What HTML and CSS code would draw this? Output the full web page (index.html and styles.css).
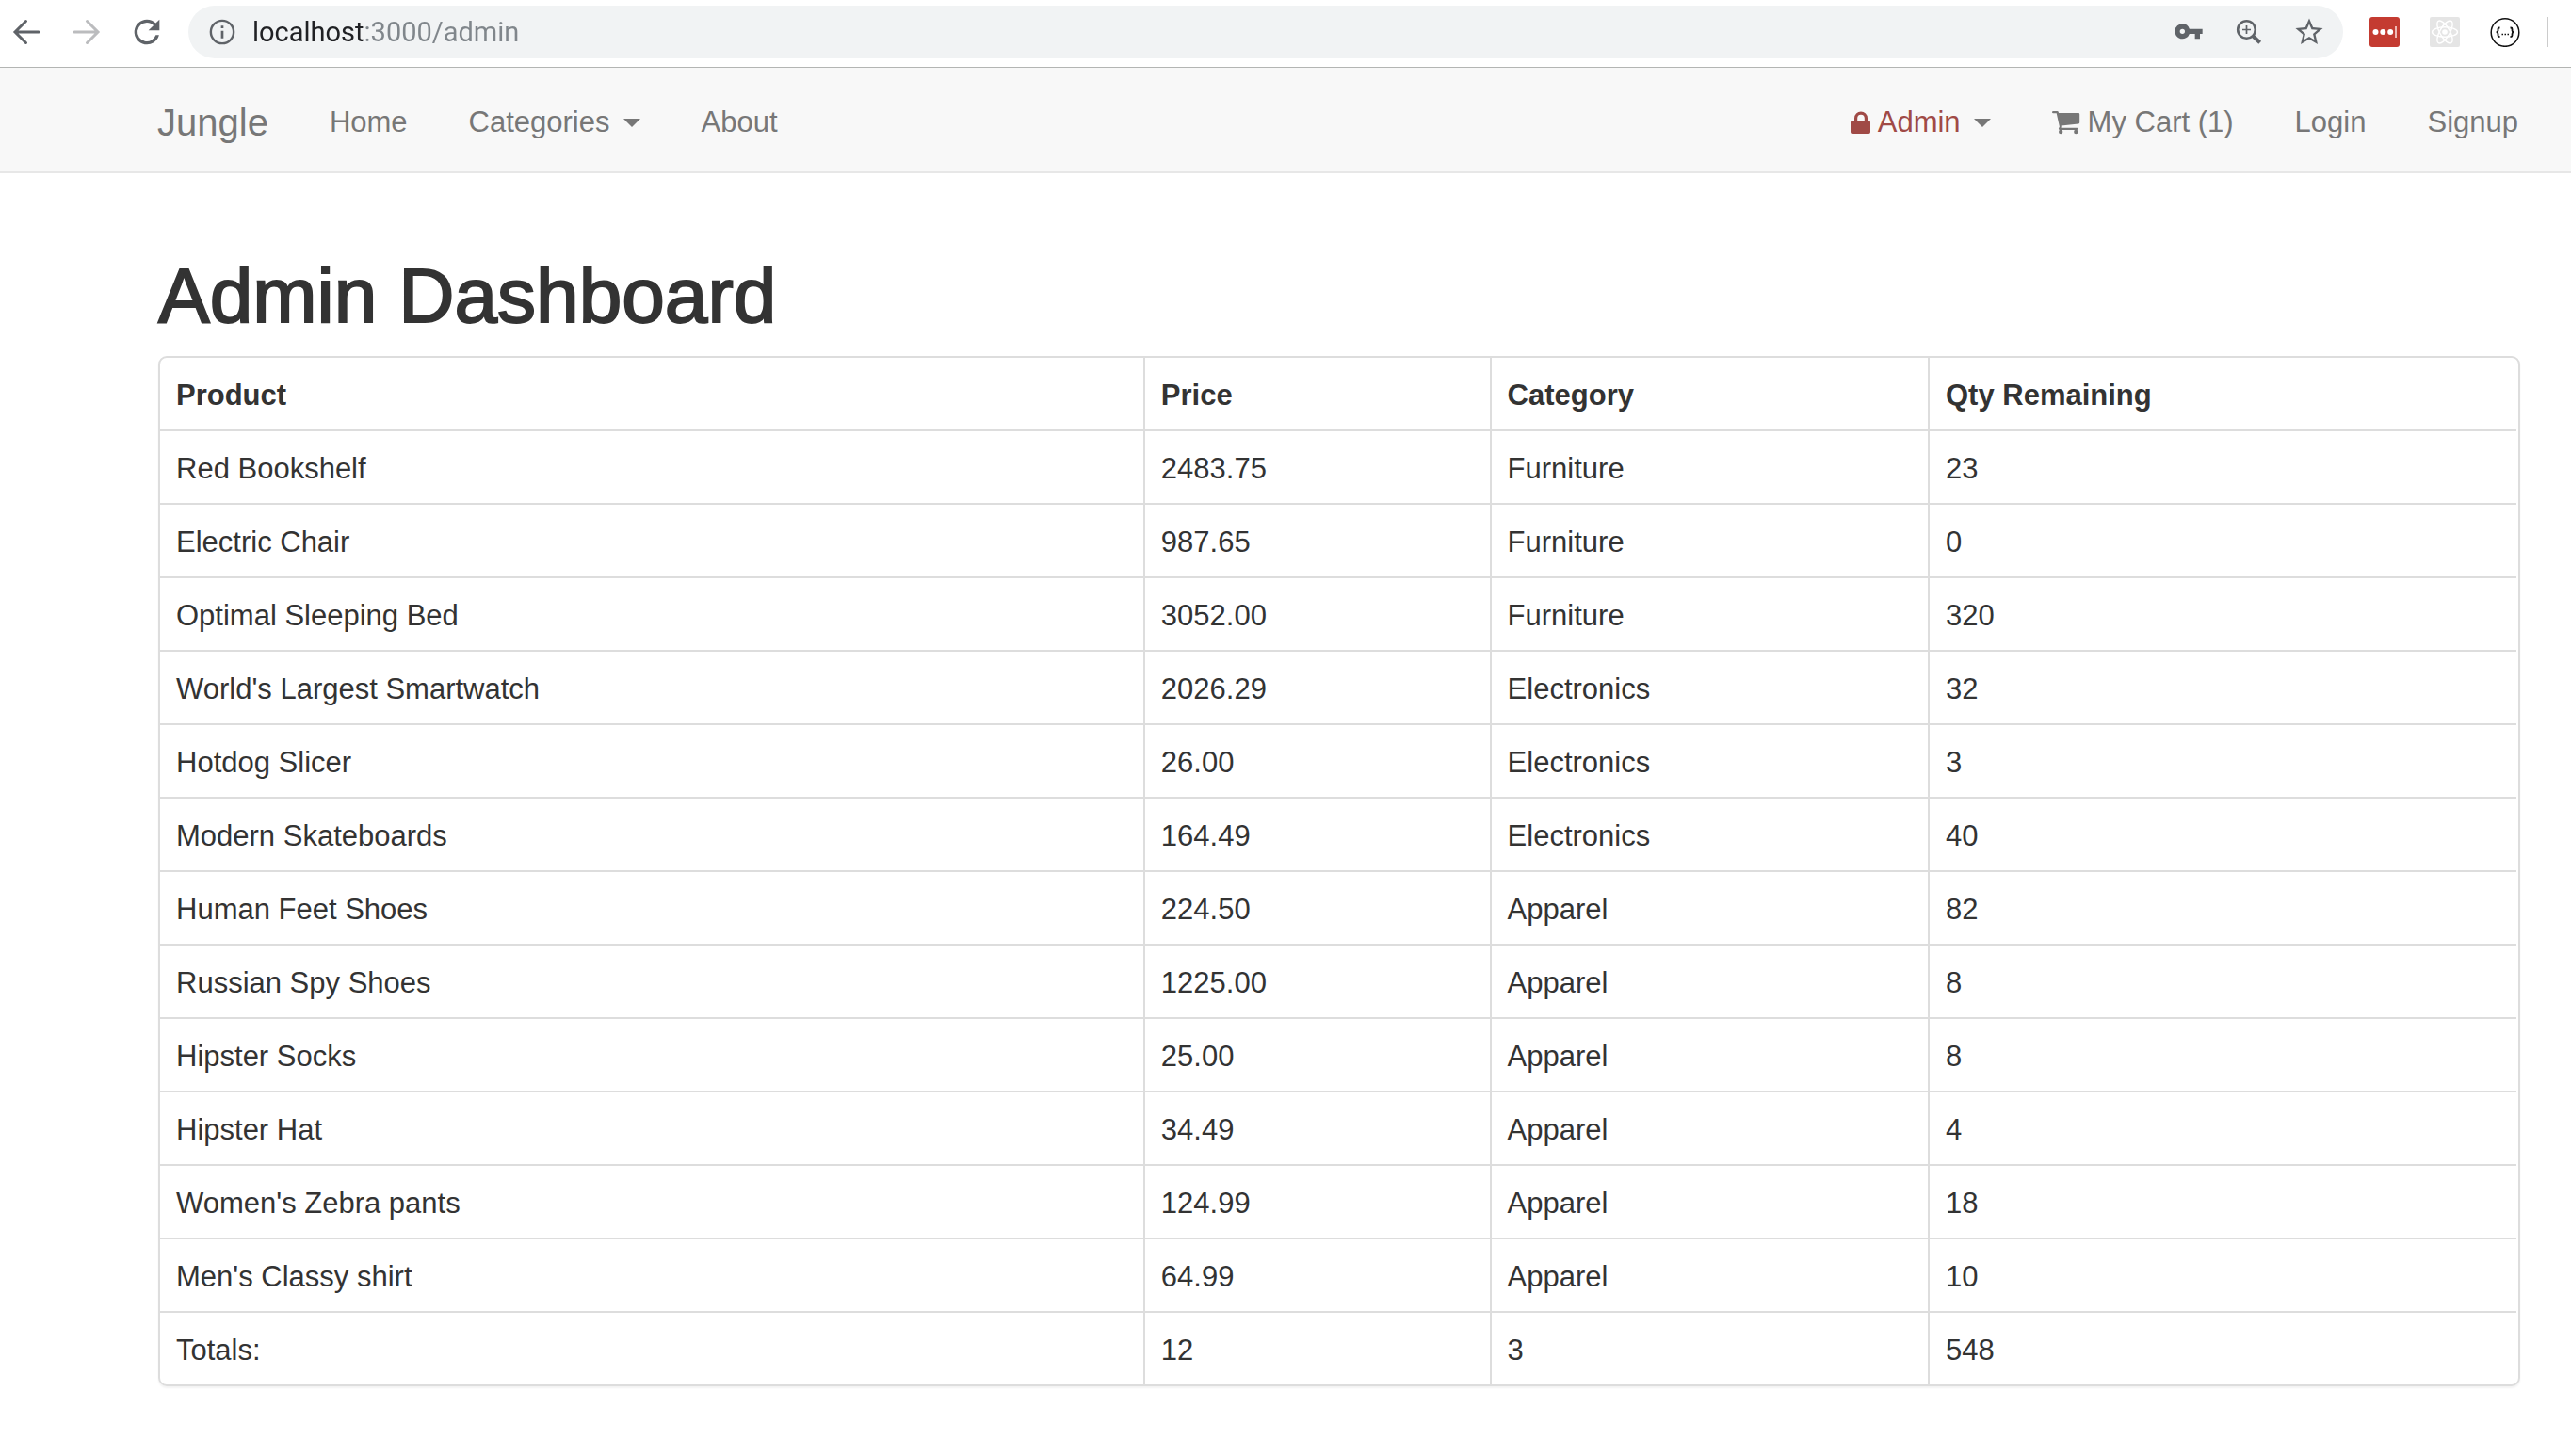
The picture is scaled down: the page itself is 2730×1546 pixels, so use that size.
FILE: index.html
```html
<!DOCTYPE html>
<html lang="en">
<head>
<meta charset="utf-8">
<title>Jungle - Admin Dashboard</title>
<link rel="stylesheet" href="styles.css">
</head>
<body>
<div class="toolbar">
  <button class="tool" type="button" aria-label="Back"><svg class="icon-lg stroke" viewBox="0 0 40 40"><path d="M33 20H9M19.500 8.500 8 20l11.500 11.500"/></svg></button>
  <button class="tool tool-disabled" type="button" aria-label="Forward" disabled><svg class="icon-lg stroke" viewBox="0 0 40 40"><path d="M7 20h24M20.500 8.500 32 20 20.500 31.500"/></svg></button>
  <button class="tool" type="button" aria-label="Reload"><svg class="icon-lg" viewBox="0 0 24 24"><path fill="currentColor" d="M17.650 6.350A7.960 7.960 0 0 0 12 4a8 8 0 1 0 7.730 10h-2.080A6 6 0 1 1 12 6c1.660 0 3.140.690 4.220 1.780L13 11h7V4z"/></svg></button>
  <form class="omnibox">
    <button class="tool" type="button" aria-label="Site information"><svg class="icon" viewBox="0 0 24 24"><path fill="currentColor" d="M11 17h2v-6h-2v6zm1-15a10 10 0 1 0 0 20 10 10 0 0 0 0-20zm0 18.200a8.200 8.200 0 1 1 0-16.400 8.200 8.200 0 0 1 0 16.400zM11 9h2V7h-2v2z"/></svg></button>
    <input class="address" type="text" aria-label="Address" value="localhost:3000/admin" spellcheck="false">
    <span class="omnibox-actions">
      <button class="tool" type="button" aria-label="Saved passwords"><svg class="icon" viewBox="0 0 24 24"><path fill="currentColor" d="M12.650 9.500A6 6 0 0 0 7 5.500a6 6 0 1 0 5.650 8H17v4h4v-4h2v-4H12.650zM7 13.500a2 2 0 1 1 0-4 2 2 0 0 1 0 4z"/></svg></button>
      <button class="tool" type="button" aria-label="Zoom"><svg class="icon" viewBox="0 0 32 32" fill="none" stroke="currentColor"><circle cx="13.500" cy="13.500" r="9.300" stroke-width="2.600"/><path stroke-width="4" d="m20 20 7.700 7.300"/><path stroke-width="1.700" d="M9 13.500h9M13.500 9v9"/></svg></button>
      <button class="tool" type="button" aria-label="Bookmark"><svg class="icon" viewBox="1 1 22 22"><path fill="currentColor" d="m22 9.240-7.190-.62L12 2 9.190 8.630 2 9.240l5.460 4.730L5.820 21 12 17.270 18.180 21l-1.630-7.030L22 9.240zM12 15.400l-3.760 2.270 1-4.280-3.320-2.880 4.380-.38L12 6.100l1.710 4.040 4.380.38-3.320 2.880 1 4.280L12 15.400z"/></svg></button>
    </span>
  </form>
  <div class="extensions">
    <button class="tool" type="button" aria-label="Password manager"><svg class="icon" viewBox="0 0 32 32"><rect width="32" height="32" rx="3" fill="#c43b31"/><g fill="#fff"><circle cx="6.500" cy="16" r="3"/><circle cx="14.300" cy="16" r="3"/><circle cx="22.200" cy="16" r="3"/><path fill="#eeb9b5" d="M27 10h2v12h-2z"/></g></svg></button>
    <button class="tool" type="button" aria-label="React tools"><svg class="icon" viewBox="0 0 32 32"><rect width="32" height="32" rx="2" fill="#e5e5e5"/><g fill="none" stroke="#fff" stroke-width="1.400"><ellipse cx="16" cy="16" rx="13.500" ry="5.200"/><ellipse cx="16" cy="16" rx="13.500" ry="5.200" transform="rotate(60 16 16)"/><ellipse cx="16" cy="16" rx="13.500" ry="5.200" transform="rotate(120 16 16)"/></g><circle cx="16" cy="16" r="2.800" fill="#fff"/></svg></button>
    <button class="tool" type="button" aria-label="JSON viewer"><svg class="icon" viewBox="0 0 32 32" fill="none" stroke="#111"><circle cx="16" cy="16.500" r="14.800" stroke-width="1.500"/><path stroke-width="1.800" d="M10.500 11.500H10q-1.500 0-1.500 1.500v1.500q0 1.500-1.800 1.700 1.800.2 1.800 1.700v1.600q0 1.500 1.500 1.500h.5M21.500 11.500h.5q1.500 0 1.500 1.500v1.500q0 1.500 1.800 1.700-1.800.2-1.800 1.700v1.600q0 1.500-1.500 1.500h-.5"/><path stroke-width="1.500" d="M12.500 18.500h1.500M15.500 18.500h1.500M18.500 18.500h1.500"/></svg></button>
  </div>
  <span class="divider"></span>
</div>

<nav class="navbar">
  <div class="nav-group">
    <a class="brand" href="#">Jungle</a>
    <a class="nav-link" href="#">Home</a>
    <button class="nav-link" type="button" aria-haspopup="true">Categories<span class="caret"></span></button>
    <a class="nav-link" href="#">About</a>
  </div>
  <div class="nav-group">
    <button class="nav-link" type="button" aria-haspopup="true"><span class="nav-label admin"><svg class="lock" viewBox="0 0 20 24"><path fill="currentColor" fill-rule="evenodd" d="M3 10V7.500a7 7 0 0 1 14 0V10h1.300q1.700 0 1.700 1.700v10.600q0 1.700-1.700 1.700H1.700Q0 24 0 22.300V11.700Q0 10 1.700 10zM6.200 10h7.600V7.500a3.800 3.800 0 0 0-7.600 0z"/></svg>Admin</span><span class="caret"></span></button>
    <a class="nav-link nav-label" href="#"><svg class="cart" viewBox="0 0 30 26"><path fill="currentColor" d="M1.200 1h4.300q1.100 0 1.300 1l.2 1H28q1.200 0 1.200 1.200v9q0 1-1.100 1.200L9.600 16.600q.3 1.100-.1 2.100h16.900q1.100 0 1.100 1.100t-1.100 1.100H8q-1.100 0-1.100-1.100 0-.4 1-2.400L4.700 3.300H1.200Q0 3.300 0 2.200T1.200 1z"/><circle fill="currentColor" cx="9.200" cy="23" r="2.200"/><circle fill="currentColor" cx="25.300" cy="23" r="2.200"/></svg>My Cart (1)</a>
    <a class="nav-link" href="#">Login</a>
    <a class="nav-link" href="#">Signup</a>
  </div>
</nav>

<main class="container">
  <h1>Admin Dashboard</h1>
  <div class="panel">
    <table>
      <colgroup><col class="col-product"><col class="col-price"><col class="col-category"><col></colgroup>
      <thead>
        <tr><th scope="col">Product</th><th scope="col">Price</th><th scope="col">Category</th><th scope="col">Qty Remaining</th></tr>
      </thead>
      <tbody>
        <tr><td>Red Bookshelf</td><td>2483.75</td><td>Furniture</td><td>23</td></tr>
        <tr><td>Electric Chair</td><td>987.65</td><td>Furniture</td><td>0</td></tr>
        <tr><td>Optimal Sleeping Bed</td><td>3052.00</td><td>Furniture</td><td>320</td></tr>
        <tr><td>World's Largest Smartwatch</td><td>2026.29</td><td>Electronics</td><td>32</td></tr>
        <tr><td>Hotdog Slicer</td><td>26.00</td><td>Electronics</td><td>3</td></tr>
        <tr><td>Modern Skateboards</td><td>164.49</td><td>Electronics</td><td>40</td></tr>
        <tr><td>Human Feet Shoes</td><td>224.50</td><td>Apparel</td><td>82</td></tr>
        <tr><td>Russian Spy Shoes</td><td>1225.00</td><td>Apparel</td><td>8</td></tr>
        <tr><td>Hipster Socks</td><td>25.00</td><td>Apparel</td><td>8</td></tr>
        <tr><td>Hipster Hat</td><td>34.49</td><td>Apparel</td><td>4</td></tr>
        <tr><td>Women's Zebra pants</td><td>124.99</td><td>Apparel</td><td>18</td></tr>
        <tr><td>Men's Classy shirt</td><td>64.99</td><td>Apparel</td><td>10</td></tr>
      </tbody>
      <tfoot>
        <tr><td>Totals:</td><td>12</td><td>3</td><td>548</td></tr>
      </tfoot>
    </table>
  </div>
</main>
</body>
</html>
```

FILE: styles.css
```css
* { box-sizing: border-box; }

body {
  margin: 0;
  background: #fff;
  color: #333;
  font-family: "Liberation Sans", Arial, sans-serif;
  font-size: 31px;
  line-height: 44px;
}

button {
  margin: 0;
  padding: 0;
  border: 0;
  background: none;
  font: inherit;
  color: inherit;
}

svg { display: block; flex: none; }

/* Browser toolbar */
.toolbar {
  display: flex;
  align-items: center;
  gap: 24px;
  padding: 6px 24px 9px 8px;
  border-bottom: 1px solid #b3b5b3;
  color: #5f6368;
}

.tool { flex: none; }
.tool-disabled { color: #bbbcbe; }
.icon { width: 32px; height: 32px; }
.icon-lg { width: 40px; height: 40px; }

.stroke {
  fill: none;
  stroke: currentColor;
  stroke-width: 3;
  stroke-linecap: round;
}

.omnibox {
  display: flex;
  flex: 1;
  align-items: center;
  gap: 16px;
  height: 56px;
  padding: 0 20px;
  border-radius: 28px;
  background: #f1f3f4;
}

/* The host name is darker than the rest of the address */
.address {
  flex: 1;
  min-width: 0;
  height: 40px;
  padding: 0;
  border: 0;
  outline: 0;
  background: linear-gradient(90deg, #202124 119px, #80868b 119px);
  background-clip: text;
  -webkit-background-clip: text;
  -webkit-text-fill-color: transparent;
  color: #80868b;
  font-family: Roboto, sans-serif;
  font-size: 29px;
}

.omnibox-actions,
.extensions {
  display: flex;
  gap: 32px;
}

.extensions { padding: 0 4px; }

.divider {
  width: 2px;
  height: 32px;
  background: #ccc;
}

/* Site navigation */
.navbar {
  display: flex;
  justify-content: space-between;
  padding: 36px 56px 30px 167px;
  border-bottom: 2px solid #e7e7e7;
  background: #f8f8f8;
  color: #777;
}

.nav-group {
  display: flex;
  align-items: center;
  gap: 65px;
}

.brand,
.nav-link {
  color: #777;
  text-decoration: none;
  white-space: nowrap;
}

.brand { font-size: 40px; }

button.nav-link {
  display: flex;
  align-items: center;
  gap: 14px;
}

.nav-label {
  display: flex;
  align-items: center;
  gap: 8px;
}

.admin { color: #a04a46; }
.lock { width: 20px; height: 24px; }
.cart { width: 30px; height: 26px; }

.caret {
  border: 9px solid transparent;
  border-top-color: currentColor;
  border-bottom: 0;
}

button.nav-link .caret { color: #777; }

/* Dashboard */
.container { padding: 85px 54px 74px 168px; }

h1 {
  margin: 0 0 19px;
  font-size: 82px;
  font-weight: 400;
  line-height: 90px;
  -webkit-text-stroke: 2px #333;
}

.panel {
  padding-right: 2px;
  border: 2px solid #ddd;
  border-radius: 9px;
  box-shadow: 0 2px 2px rgba(0, 0, 0, .05);
}

table {
  width: 100%;
  border-collapse: separate;
  border-spacing: 0;
  table-layout: fixed;
}

.col-product { width: 41.8%; }
.col-price { width: 14.7%; }
.col-category { width: 18.6%; }

th,
td {
  padding: 18px 17px 14px;
  border-right: 2px solid #ddd;
  border-bottom: 2px solid #ddd;
  text-align: left;
}

th:last-child,
td:last-child { border-right: 0; }

tfoot td { border-bottom: 0; }
```
